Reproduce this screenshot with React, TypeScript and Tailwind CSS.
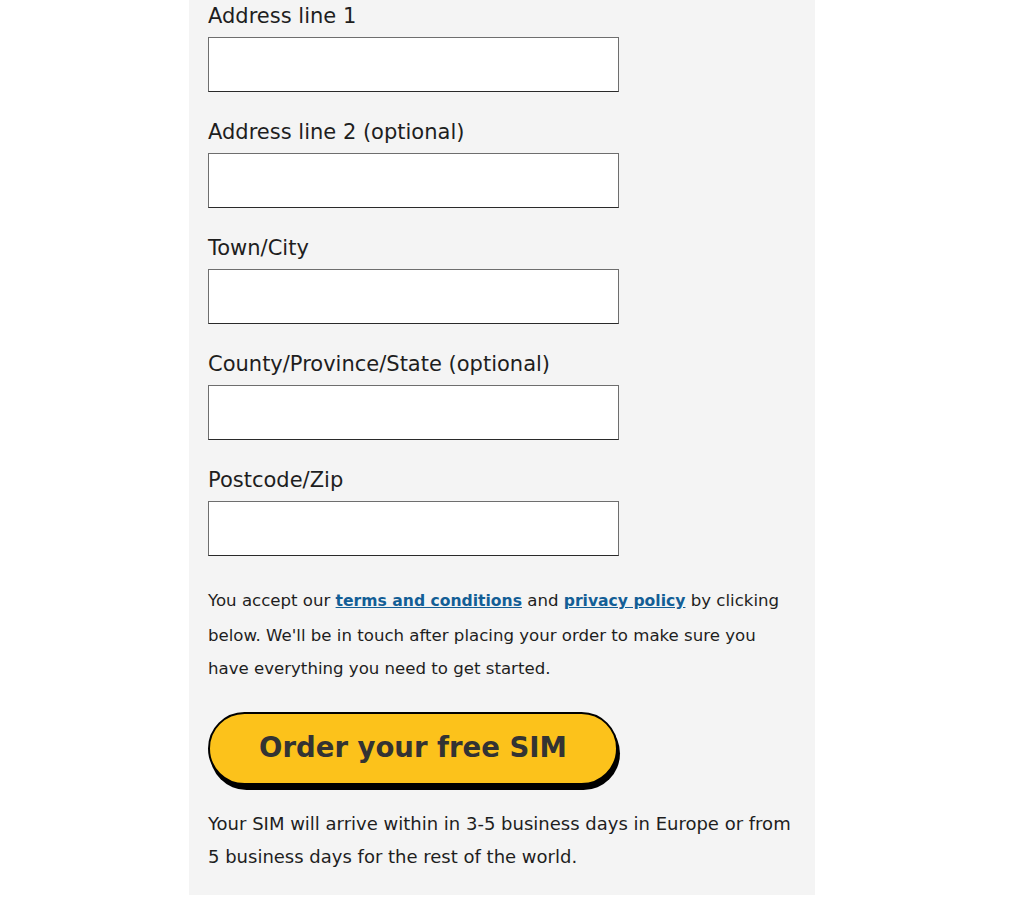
import React from "react";

const labels = [
  "Address line 1",
  "Address line 2 (optional)",
  "Town/City",
  "County/Province/State (optional)",
  "Postcode/Zip",
];

export default function App() {
  return (
    <div
      className="min-h-[913px] w-full bg-white"
      style={{ fontFamily: '"DejaVu Sans", "Noto Sans", Arial, sans-serif' }}
    >
      <div className="ml-[189px] w-[626px] bg-[#f4f4f4] pl-[19px] pr-[19px] pt-[1px] pb-[22px] text-[#1e1e1e]">
        {labels.map((l, i) => (
          <div key={l} className={i === 0 ? "" : "mt-[25px]"}>
            <label className="block text-[21px] leading-[30px]">{l}</label>
            <input
              type="text"
              className="mt-[6px] block h-[55px] w-[411px] border border-[#6e6e6e] border-b-[#2a2a2a] bg-white px-2 outline-none"
            />
          </div>
        ))}
        <p className="mt-[28px] w-[588px] text-[16.6px] leading-[33.5px] text-[#1e1e1e]">
          You accept our{" "}
          <a href="#" className="text-[15.6px] font-bold text-[#135e96] underline">
            terms and conditions
          </a>{" "}
          and{" "}
          <a href="#" className="text-[15.6px] font-bold text-[#135e96] underline">
            privacy policy
          </a>{" "}
          by clicking below. We'll be in touch after placing your order to make sure you have everything you need to get started.
        </p>
        <button
          type="button"
          className="mt-[26px] flex h-[73px] w-[410px] items-center justify-center rounded-full border-2 border-black bg-[#fcc21b] text-[27.5px] font-bold text-[#333333] shadow-[2px_5px_0_0_#000]"
        >
          Order your free SIM
        </button>
        <p className="mt-[22px] text-[18px] leading-[33px] text-[#1e1e1e]">
          Your SIM will arrive within in 3-5 business days in Europe or from 5 business days for the rest of the world.
        </p>
      </div>
    </div>
  );
}
